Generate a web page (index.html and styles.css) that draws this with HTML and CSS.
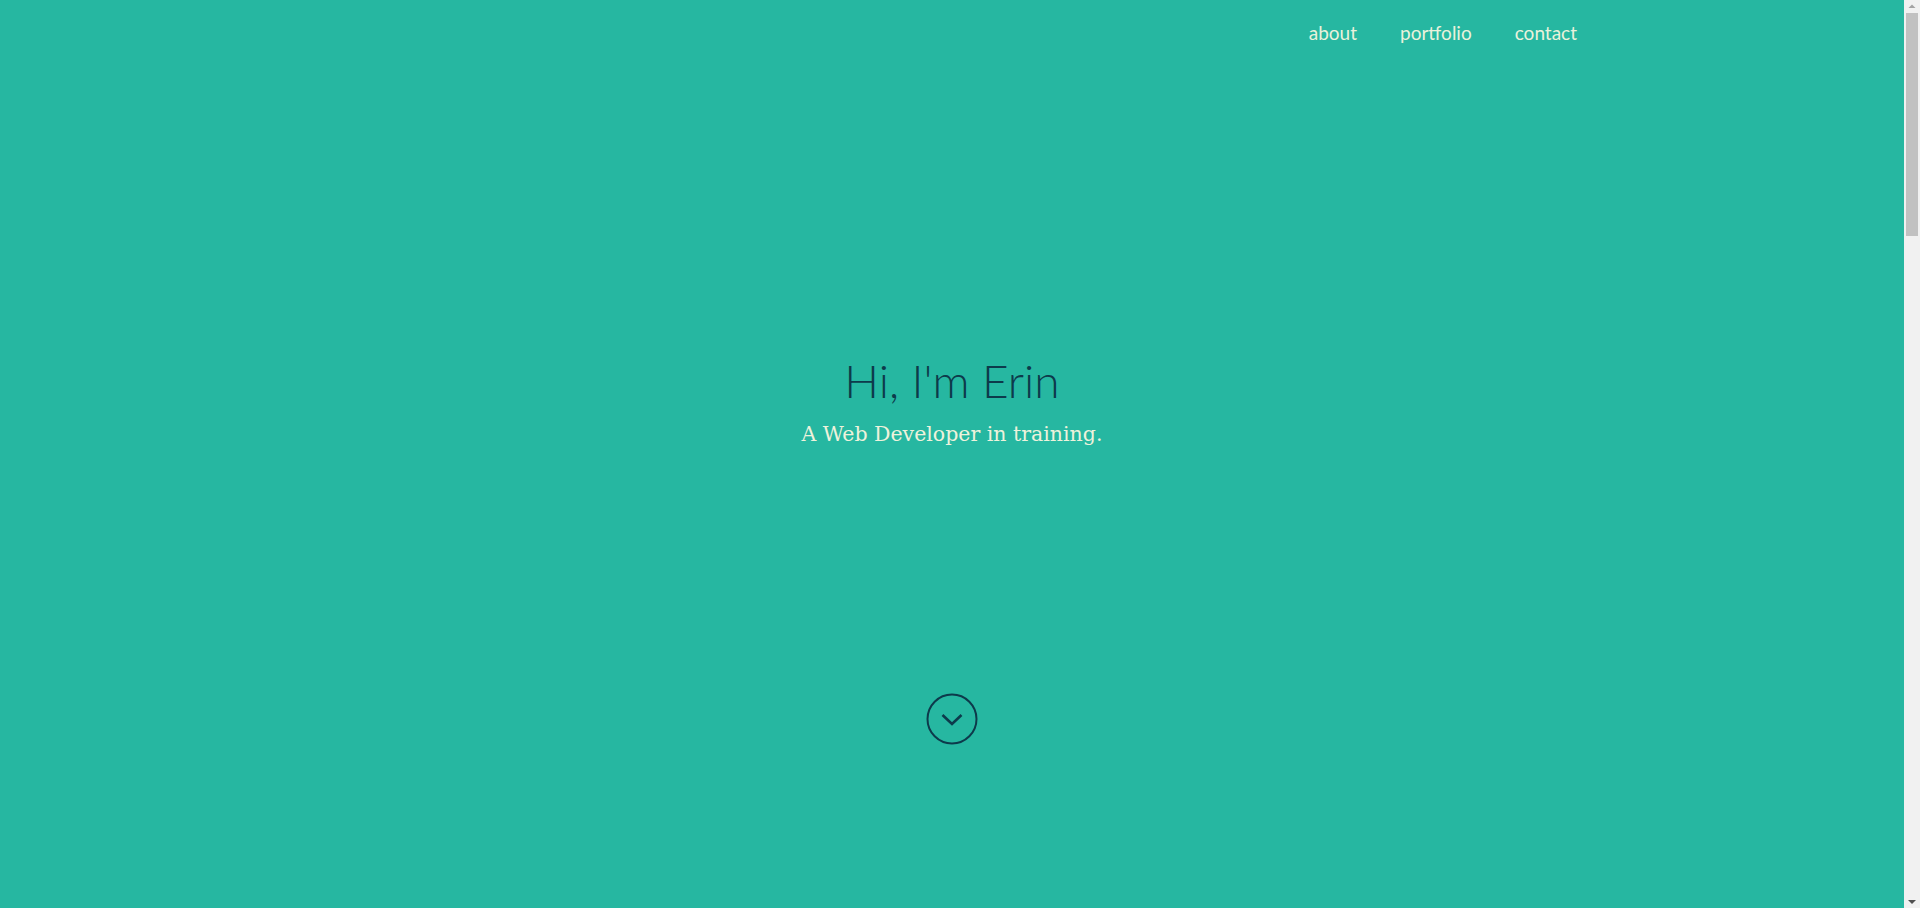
FILE: index.html
```html
<!DOCTYPE html>
<html lang="en">
<head>
<meta charset="utf-8">
<title>Erin — Web Developer</title>
<link rel="stylesheet" href="styles.css">
</head>
<body>
<div class="page">
  <header class="site-header">
    <nav class="nav">
      <a class="nav-link" href="#about">about</a>
      <a class="nav-link" href="#portfolio">portfolio</a>
      <a class="nav-link" href="#contact">contact</a>
    </nav>
  </header>
  <main class="hero">
    <div class="hero-text">
      <h1 class="hero-title">Hi, I'm Erin</h1>
      <p class="hero-sub">A Web Developer in training.</p>
    </div>
    <a class="scroll-down" href="#about" aria-label="scroll down">
      <svg width="52" height="52" viewBox="0 0 52 52">
        <circle cx="26" cy="26" r="24.5" fill="none" stroke="#0d3a4b" stroke-width="2"/>
        <path d="M16.5 22 L26 31 L35.5 22" fill="none" stroke="#0d3a4b" stroke-width="2.6"/>
      </svg>
    </a>
  </main>
</div>
<div class="scrollbar" aria-hidden="true">
  <div class="sb-btn">
    <svg width="16" height="13" viewBox="0 0 16 13"><path d="M4.5 8 L8 4.5 L11.5 8 Z" fill="#a3a3a3"/></svg>
  </div>
  <div class="sb-thumb"></div>
  <div class="sb-track"></div>
  <div class="sb-btn">
    <svg width="16" height="13" viewBox="0 0 16 13"><path d="M4 5 L12 5 L8 9 Z" fill="#505050"/></svg>
  </div>
</div>
</body>
</html>
```
FILE: styles.css
```css
html, body {
  margin: 0;
  padding: 0;
  height: 908px;
  overflow: hidden;
}
body {
  display: flex;
  background: #26b7a1;
  font-family: Lato, "Open Sans", sans-serif;
  color: #0d3a4b;
}
.page {
  flex: 1;
  display: flex;
  flex-direction: column;
}
.site-header {
  width: 1250px;
  margin: 0 auto;
  padding-top: 19px;
}
.nav {
  display: flex;
  justify-content: flex-end;
  gap: 43px;
}
.nav-link {
  color: #eaf2dc;
  text-decoration: none;
  font-size: 19px;
  line-height: 28px;
}
.hero {
  flex: 1;
  display: flex;
  flex-direction: column;
  align-items: center;
}
.hero-text {
  margin-top: 307px;
  text-align: center;
}
.hero-title {
  margin: 0;
  font-weight: 300;
  font-size: 46px;
  line-height: 54px;
  color: #0d3a4b;
}
.hero-sub {
  margin: 12px 0 0;
  font-family: "DejaVu Serif", serif;
  font-size: 20.5px;
  line-height: 28px;
  color: #eef2dc;
}
.scroll-down {
  margin-top: 245px;
  display: block;
  width: 52px;
  height: 52px;
}
.scrollbar {
  width: 16px;
  height: 908px;
  background: #f1f1f1;
  display: flex;
  flex-direction: column;
}
.sb-btn {
  height: 13px;
  display: flex;
}
.sb-thumb {
  height: 223px;
  margin: 0 2px;
  background: #c1c1c1;
}
.sb-track {
  flex: 1;
}
```
